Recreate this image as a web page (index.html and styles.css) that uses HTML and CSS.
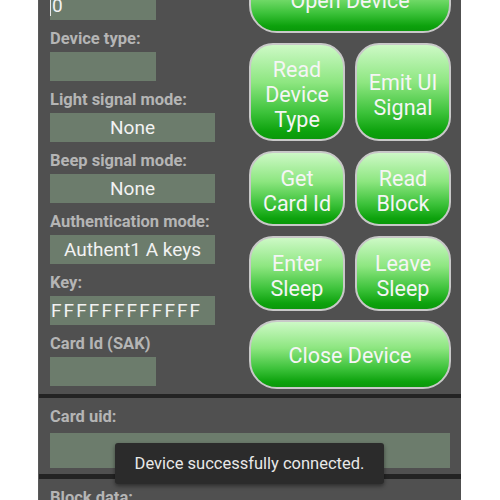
FILE: index.html
```html
<!DOCTYPE html>
<html>
<head>
<meta charset="utf-8">
<link rel="stylesheet" href="styles.css">
</head>
<body>
<div class="panel">
  <div class="top">
    <div class="left">
      <div class="label">Device id:</div>
      <div class="field small"><span class="cursor"></span>0</div>
      <div class="label">Device type:</div>
      <div class="field small"></div>
      <div class="label">Light signal mode:</div>
      <div class="field center">None</div>
      <div class="label">Beep signal mode:</div>
      <div class="field center">None</div>
      <div class="label">Authentication mode:</div>
      <div class="field center">Authent1 A keys</div>
      <div class="label">Key:</div>
      <div class="field key">FFFFFFFFFFFF</div>
      <div class="label">Card Id (SAK)</div>
      <div class="field small"></div>
    </div>
    <div class="buttons">
      <div class="btn wide open">Open Device</div>
      <div class="btn tall">Read<br>Device<br>Type</div>
      <div class="btn tall">Emit UI<br>Signal</div>
      <div class="btn mid">Get<br>Card Id</div>
      <div class="btn mid">Read<br>Block</div>
      <div class="btn mid">Enter<br>Sleep</div>
      <div class="btn mid">Leave<br>Sleep</div>
      <div class="btn wide close">Close Device</div>
    </div>
  </div>
  <div class="sep"></div>
  <div class="section">
    <div class="label">Card uid:</div>
    <div class="field full"></div>
  </div>
  <div class="sep sep2"></div>
  <div class="section">
    <div class="label">Block data:</div>
    <div class="field full"></div>
  </div>
  <div class="toast">Device successfully connected.</div>
</div>
</body>
</html>
```

FILE: styles.css
```css
html, body {
  margin: 0;
  padding: 0;
  background: #ffffff;
  height: 500px;
  overflow: hidden;
}
body {
  font-family: Roboto, "Noto Sans", sans-serif;
}
.panel {
  position: relative;
  margin-left: 38px;
  width: 423px;
  height: 600px;
  background: #505050;
  margin-top: -41px;
  border-left: 1px solid #5a5a5a;
  box-sizing: border-box;
}
.top {
  display: flex;
  align-items: flex-start;
  padding: 0 10px 0 11px;
  gap: 34px;
}
.left {
  display: flex;
  flex-direction: column;
  width: 165px;
  padding-bottom: 8px;
}
.label {
  font-size: 16.5px;
  font-weight: bold;
  color: #b5b5b5;
  line-height: 20px;
  padding: 9px 0 3px;
  white-space: nowrap;
}
.field {
  height: 29px;
  background: #6c7c6c;
  color: #f2f2f2;
  font-size: 19px;
  line-height: 29px;
  position: relative;
  white-space: nowrap;
}
.field.small {
  width: 106px;
  padding-left: 2px;
  box-sizing: border-box;
}
.cursor {
  position: absolute;
  left: 0;
  top: 3px;
  width: 1px;
  height: 22px;
  background: #e8e8e8;
}
.field.center {
  text-align: center;
}
.field.key {
  letter-spacing: 2.1px;
  padding-left: 1px;
}
.buttons {
  flex: 1;
  display: grid;
  grid-template-columns: 1fr 1fr;
  column-gap: 10px;
  row-gap: 10px;
  padding-top: 6px;
}
.btn {
  box-sizing: border-box;
  border: 2px solid #c8c8c8;
  border-radius: 24px;
  background: linear-gradient(to bottom, #cdf9c6 0%, #8de680 40%, #3cc23a 72%, #0da20d 92%, #0a980a 100%);
  color: #f5f5f5;
  font-size: 21.5px;
  line-height: 25px;
  padding-top: 5px;
  display: flex;
  align-items: center;
  justify-content: center;
  text-align: center;
}
.btn.wide {
  grid-column: span 2;
  height: 68px;
  border-radius: 28px;
  padding-top: 2px;
}
.btn.tall {
  height: 98px;
}
.btn.mid {
  height: 75px;
}
.btn.close {
  height: 69px;
  margin-top: -1px;
}
.sep {
  height: 4px;
  background: #232323;
}
.sep2 {
  height: 5px;
}
.section {
  padding: 0 11px 6px 11px;
}
.section .label {
  padding: 9px 0 6px;
}
.field.full {
  height: 35px;
}
.toast {
  position: absolute;
  left: 76px;
  top: 484px;
  width: 269px;
  height: 41px;
  box-sizing: border-box;
  background: #2b2b2b;
  border-radius: 3px;
  box-shadow: 0 2px 4px rgba(0,0,0,0.45);
  color: #e8e8e8;
  font-size: 16.5px;
  line-height: 41px;
  text-align: center;
}
```
